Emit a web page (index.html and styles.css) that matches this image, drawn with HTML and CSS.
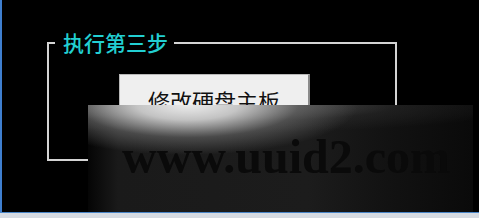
FILE: index.html
```html
<!DOCTYPE html>
<html>
<head>
<meta charset="utf-8">
<link rel="stylesheet" href="styles.css">
</head>
<body>
<div class="window">
  <div class="group">
    <div class="legend">执行第三步</div>
    <div class="btn">修改硬盘主板</div>
  </div>
  <div class="watermark"><span class="wm-text">www.uuid2.com</span></div>
</div>
<div class="statusbar"></div>
</body>
</html>
```
FILE: styles.css
```css
html, body {
  margin: 0;
  padding: 0;
  background: #000;
  width: 479px;
  height: 218px;
  overflow: hidden;
}
.window {
  position: relative;
  height: 212px;
  border-left: 2px solid #3f7fcf;
  box-sizing: border-box;
  padding-top: 42px;
  padding-left: 45px;
}
.group {
  position: relative;
  width: 350px;
  height: 119px;
  box-sizing: border-box;
  border: 2px solid #d4d4d4;
}
.legend {
  position: absolute;
  left: 6px;
  top: -14px;
  padding: 0 6px 0 8px;
  background: #000;
  color: #22cfd2;
  font-family: "Noto Sans CJK SC", sans-serif;
  font-weight: 500;
  font-size: 21px;
  line-height: 24px;
}
.btn {
  margin-left: 70px;
  margin-top: 30px;
  width: 191px;
  height: 50px;
  box-sizing: border-box;
  background: #efefef;
  border: 1px solid #b8b8b8;
  border-right: 2px solid #8a8a8a;
  color: #111;
  font-family: "Noto Sans CJK SC", sans-serif;
  font-size: 22px;
  line-height: 26px;
  padding-top: 12px;
  text-align: center;
}
.watermark {
  position: absolute;
  left: 86px;
  top: 105px;
  width: 385px;
  height: 107px;
  overflow: hidden;
  background:
    radial-gradient(ellipse 170px 50px at 100px 0px, rgba(235,235,235,1) 0%, rgba(210,210,210,0.9) 30%, rgba(120,120,120,0.5) 65%, rgba(40,40,40,0) 100%),
    radial-gradient(ellipse 320px 28px at 120px 0px, rgba(140,140,140,0.6) 0%, rgba(60,60,60,0.3) 60%, rgba(0,0,0,0) 100%),
    linear-gradient(to right, #050505 0px, #1a1a1a 30px, #1c1c1c 220px, #121212 300px, #0a0a0a 385px);
}
.wm-text {
  position: absolute;
  left: 34px;
  top: 24px;
  font-family: "Liberation Serif", serif;
  font-weight: bold;
  font-size: 48px;
  line-height: 56px;
  color: #0a0a0a;
  white-space: nowrap;
  filter: blur(0.7px);
}
.statusbar {
  height: 6px;
  border-top: 1px solid #4a86c8;
  background: #d6dbe2;
  box-sizing: border-box;
}
```
